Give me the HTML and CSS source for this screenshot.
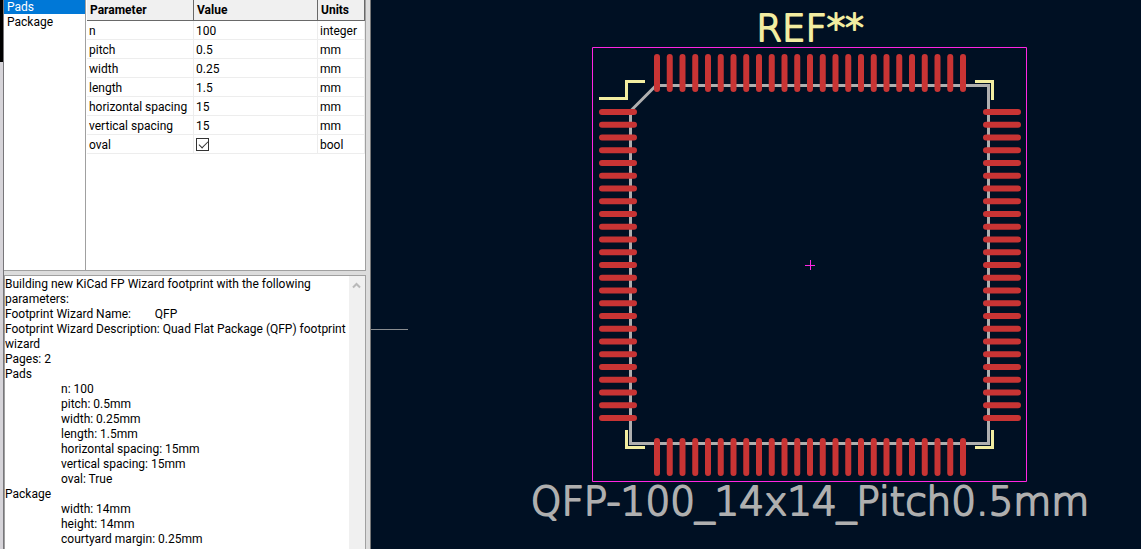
FILE: index.html
```html
<!DOCTYPE html>
<html lang="en">
<head>
<meta charset="utf-8">
<title>Footprint Wizard</title>
<link rel="stylesheet" href="styles.css">
</head>
<body>
<div class="app">
  <div class="edge"></div>
  <div class="sidebar">
    <div class="settings">
      <div class="pages">
        <button class="page selected" type="button">Pads</button>
        <button class="page" type="button">Package</button>
      </div>
      <div class="grid">
        <table class="params">
          <colgroup><col class="name"><col class="value"><col class="units"></colgroup>
          <thead><tr><th>Parameter</th><th>Value</th><th>Units</th></tr></thead>
          <tbody>
            <tr><td>n</td><td>100</td><td>integer</td></tr>
            <tr><td>pitch</td><td>0.5</td><td>mm</td></tr>
            <tr><td>width</td><td>0.25</td><td>mm</td></tr>
            <tr><td>length</td><td>1.5</td><td>mm</td></tr>
            <tr><td>horizontal spacing</td><td>15</td><td>mm</td></tr>
            <tr><td>vertical spacing</td><td>15</td><td>mm</td></tr>
            <tr><td><label for="oval">oval</label></td><td><input class="check" id="oval" type="checkbox" checked></td><td>bool</td></tr>
          </tbody>
        </table>
      </div>
    </div>
    <div class="log">
      <textarea class="messages" aria-label="Build messages" readonly>Building new KiCad FP Wizard footprint with the following parameters:
Footprint Wizard Name:        QFP
Footprint Wizard Description: Quad Flat Package (QFP) footprint wizard
Pages: 2
Pads
&#9;n: 100
&#9;pitch: 0.5mm
&#9;width: 0.25mm
&#9;length: 1.5mm
&#9;horizontal spacing: 15mm
&#9;vertical spacing: 15mm
&#9;oval: True
Package
&#9;width: 14mm
&#9;height: 14mm
&#9;courtyard margin: 0.25mm</textarea>
      <div class="scrollbar">
        <svg width="9" height="7" viewBox="0 0 9 7" aria-hidden="true"><path d="M1 5.500 4.500 2 8 5.500" fill="none" stroke="#b9b9b9" stroke-width="2"/></svg>
      </div>
    </div>
  </div>
  <svg class="board" viewBox="371 0 770 549" preserveAspectRatio="xMidYMin slice" role="img" aria-label="QFP-100 footprint">
    <defs>
      <path id="row" d="M657 57v32m12.750-32v32m12.750-32v32m12.750-32v32m12.750-32v32m12.750-32v32m12.750-32v32m12.750-32v32m12.750-32v32m12.750-32v32m12.750-32v32m12.750-32v32m12.750-32v32m12.750-32v32m12.750-32v32m12.750-32v32m12.750-32v32m12.750-32v32m12.750-32v32m12.750-32v32m12.750-32v32m12.750-32v32m12.750-32v32m12.750-32v32m12.750-32v32"/>
    </defs>
    <path class="axis" d="M371 329.500h37"/>
    <path class="fab" d="M656 85.500H988.500V443.500H630.500V111Z"/>
    <path class="silk" d="M599 98.500H626.500V81.500H645M975 81.500H992.500V100M626.500 430V447.500H645M975 447.500H992.500V430"/>
    <g class="pads">
      <use href="#row"/>
      <use href="#row" y="384"/>
      <use href="#row" transform="rotate(-90 810 265)"/>
      <use href="#row" transform="rotate(90 810 265)"/>
    </g>
    <path class="courtyard" d="M592.500 47.500H1026.500V481.500H592.500ZM805 265.500h10M810.500 260v10"/>
    <text class="label reference" x="810" y="41">REF**</text>
    <text class="label part" x="810" y="515">QFP-100_14x14_Pitch0.5mm</text>
  </svg>
</div>
</body>
</html>
```
FILE: styles.css
```css
* { box-sizing: border-box; }
body { margin: 0; font: 12px/15px Roboto, "Open Sans", sans-serif; color: #000; }
.app { display: flex; height: 100vh; overflow: hidden; background: #001023; }
.edge { width: 4px; border-right: 1px solid #77767a; background: linear-gradient(#000 62px, #d6d4d9 62px); }
.sidebar { display: flex; flex-direction: column; width: 367px; padding-right: 4px; background: #dcdcdc; border-right: 1px solid #777; }
.settings { display: flex; height: 271px; background: #fff; border: solid #a0a0a0; border-width: 0 1px 1px 0; }
.pages { width: 82px; border-right: 1px solid #a0a0a0; }
.page { display: block; width: 100%; height: 15px; padding: 2px 3px 0; border: 0; background: none; font: inherit; line-height: 13px; text-align: left; color: #000; }
.page.selected { height: 14px; padding-top: 1px; background: #0078d7; color: #fff; }
.grid { flex: 1; padding-left: 1px; }
.params { width: 100%; table-layout: fixed; border-collapse: separate; border-spacing: 0; }
.params .name { width: 107px; }
.params .value { width: 124px; }
.params th, .params td { padding: 0 2px; text-align: left; white-space: nowrap; }
.params th { height: 21px; padding: 0 3px; background: #f0f0f0; border: solid #696969; border-width: 0 1px 1px 0; }
.params td { height: 19px; padding-top: 3px; line-height: 15px; border: solid #ededed; border-width: 0 1px 1px 0; }
.params td:has(.check) { padding-top: 0; }
.check { display: block; appearance: none; width: 13px; height: 13px; margin: 0; border: 1px solid #333; background: #fff; position: relative; }
.check:checked::after { content: ""; position: absolute; left: 2px; top: 2px; width: 8px; height: 4px; border: solid #333; border-width: 0 0 1px 1px; transform: rotate(-45deg); }
.log { display: flex; flex: 1; min-height: 0; margin-top: 4px; background: #fff; border: solid #a0a0a0; border-width: 1px 1px 0 1px; }
.messages { flex: 1; min-width: 0; padding: 1px 0 0; border: 0; outline: 0; resize: none; overflow: hidden; background: #fff; color: #000; font: inherit; tab-size: 56px; }
.scrollbar { width: 16px; padding: 6px 3px; background: #f0f0f0; }
.scrollbar svg { display: block; }
.board { flex: 1; min-width: 0; height: 100%; }
.axis { stroke: #8a8d90; }
.fab { fill: none; stroke: #afafaf; stroke-width: 3; }
.silk { fill: none; stroke: #f2eda1; stroke-width: 3; }
.pads { fill: none; stroke: #c83434; stroke-width: 6; stroke-linecap: round; }
.courtyard { fill: none; stroke: #ff26e2; }
.label { font-family: "DejaVu Sans", sans-serif; font-size: 39px; font-weight: 200; text-anchor: middle; stroke-width: 2; stroke-linejoin: round; }
.reference { font-size: 37px; fill: #f2eda1; stroke: #f2eda1; }
.part { fill: #afafaf; stroke: #afafaf; }
```
